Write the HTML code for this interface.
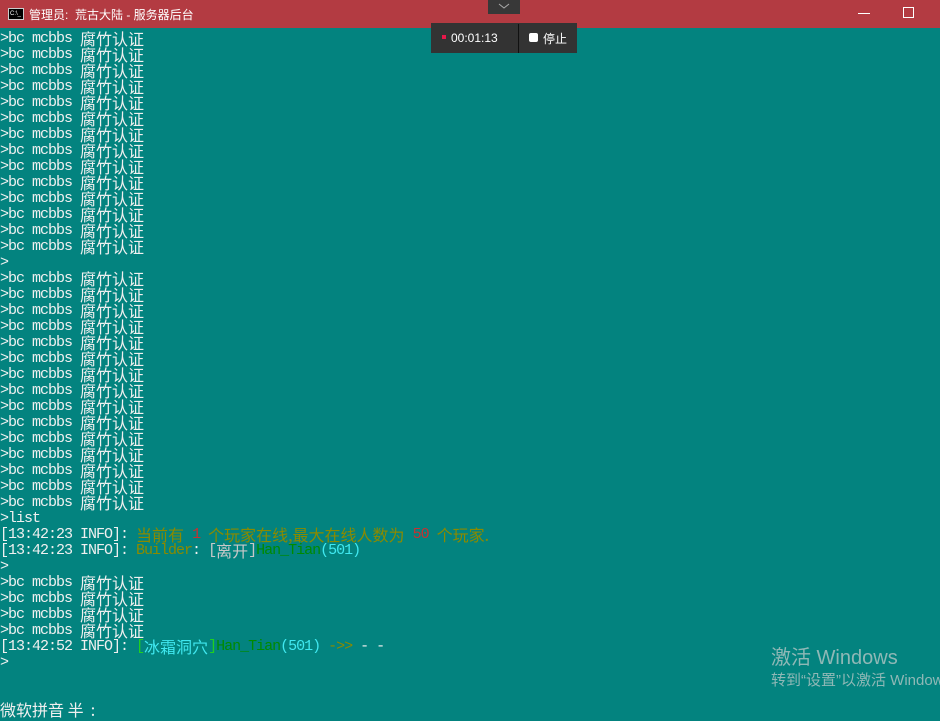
<!DOCTYPE html>
<html><head><meta charset="utf-8"><style>
*{margin:0;padding:0}
body{width:940px;height:721px;overflow:hidden;background:#03837f;position:relative;font-family:"Liberation Mono","Noto Sans CJK SC",monospace}
#tb{position:absolute;left:0;top:0;width:940px;height:28px;background:#b33b42}
#tb .t{position:absolute;left:29px;top:6px;font:12px "Liberation Sans","Noto Sans CJK SC",sans-serif;color:#fff}
#ico{position:absolute;left:8px;top:8px;width:14px;height:10px;background:#000;border:1px solid #ccc;font:6px "Liberation Sans",sans-serif;color:#fff;line-height:10px;text-indent:1px}
#con{position:absolute;left:0;top:31px;color:#f0f0f0;font-size:15px;letter-spacing:-1px}
.l{display:block;height:16px;line-height:16px;white-space:pre}
.l span{display:inline-block;vertical-align:top;height:16px;line-height:16px}
.l .c{font-family:"Noto Sans CJK SC",sans-serif;font-size:16px;letter-spacing:0;line-height:16px;height:16px;position:relative;top:-1px}
.y{color:#8a8a00}.r{color:#c83030}.g{color:#008a00}.a{color:#40e8f0}.s{color:#c8c8c8}.b{color:#20d020}
#rec{position:absolute;left:431px;top:23px;width:146px;height:30px;background:#333;color:#fff;font:12px "Liberation Sans","Noto Sans CJK SC",sans-serif}
#wm{position:absolute;left:771px;top:646px;color:#8fb8b6;font-family:"Liberation Sans","Noto Sans CJK SC",sans-serif;white-space:nowrap}
</style></head><body>
<div id="tb"><div id="ico">C:\_</div><div class="t">管理员:&nbsp;&nbsp;荒古大陆 - 服务器后台</div>
<div style="position:absolute;left:488px;top:0;width:32px;height:14px;background:#383838"><svg width="32" height="14"><path d="M11 4l5 4 5-4" stroke="#aaa" fill="none"/></svg></div>
<div style="position:absolute;left:858px;top:13px;width:12px;height:1px;background:#fff"></div>
<div style="position:absolute;left:903px;top:7px;width:9px;height:9px;border:1px solid #fff"></div>
</div>
<div id="rec"><div style="position:absolute;left:11px;top:12px;width:4px;height:4px;background:#e8174a"></div><div style="position:absolute;left:20px;top:8px">00:01:13</div><div style="position:absolute;left:87px;top:1px;width:1px;height:29px;background:#111"></div><div style="position:absolute;left:98px;top:10px;width:9px;height:9px;background:#fff;border-radius:2px"></div><div style="position:absolute;left:112px;top:7px">停止</div></div>
<div id="con">
<div class="l">&gt;bc mcbbs <span class="c">腐竹认证</span></div>
<div class="l">&gt;bc mcbbs <span class="c">腐竹认证</span></div>
<div class="l">&gt;bc mcbbs <span class="c">腐竹认证</span></div>
<div class="l">&gt;bc mcbbs <span class="c">腐竹认证</span></div>
<div class="l">&gt;bc mcbbs <span class="c">腐竹认证</span></div>
<div class="l">&gt;bc mcbbs <span class="c">腐竹认证</span></div>
<div class="l">&gt;bc mcbbs <span class="c">腐竹认证</span></div>
<div class="l">&gt;bc mcbbs <span class="c">腐竹认证</span></div>
<div class="l">&gt;bc mcbbs <span class="c">腐竹认证</span></div>
<div class="l">&gt;bc mcbbs <span class="c">腐竹认证</span></div>
<div class="l">&gt;bc mcbbs <span class="c">腐竹认证</span></div>
<div class="l">&gt;bc mcbbs <span class="c">腐竹认证</span></div>
<div class="l">&gt;bc mcbbs <span class="c">腐竹认证</span></div>
<div class="l">&gt;bc mcbbs <span class="c">腐竹认证</span></div>
<div class="l">&gt;</div>
<div class="l">&gt;bc mcbbs <span class="c">腐竹认证</span></div>
<div class="l">&gt;bc mcbbs <span class="c">腐竹认证</span></div>
<div class="l">&gt;bc mcbbs <span class="c">腐竹认证</span></div>
<div class="l">&gt;bc mcbbs <span class="c">腐竹认证</span></div>
<div class="l">&gt;bc mcbbs <span class="c">腐竹认证</span></div>
<div class="l">&gt;bc mcbbs <span class="c">腐竹认证</span></div>
<div class="l">&gt;bc mcbbs <span class="c">腐竹认证</span></div>
<div class="l">&gt;bc mcbbs <span class="c">腐竹认证</span></div>
<div class="l">&gt;bc mcbbs <span class="c">腐竹认证</span></div>
<div class="l">&gt;bc mcbbs <span class="c">腐竹认证</span></div>
<div class="l">&gt;bc mcbbs <span class="c">腐竹认证</span></div>
<div class="l">&gt;bc mcbbs <span class="c">腐竹认证</span></div>
<div class="l">&gt;bc mcbbs <span class="c">腐竹认证</span></div>
<div class="l">&gt;bc mcbbs <span class="c">腐竹认证</span></div>
<div class="l">&gt;bc mcbbs <span class="c">腐竹认证</span></div>
<div class="l">&gt;list</div>
<div class="l">[13:42:23 INFO]: <span class="c y">当前有</span> <span class="r">1</span> <span class="c y">个玩家在线,最大在线人数为</span> <span class="r">50</span> <span class="c y">个玩家.</span></div>
<div class="l">[13:42:23 INFO]: <span class="y">Builder</span>: <span class="s">[</span><span class="c s">离开</span><span class="s">]</span><span class="g">Han_Tian</span><span class="a">(501)</span></div>
<div class="l">&gt;</div>
<div class="l">&gt;bc mcbbs <span class="c">腐竹认证</span></div>
<div class="l">&gt;bc mcbbs <span class="c">腐竹认证</span></div>
<div class="l">&gt;bc mcbbs <span class="c">腐竹认证</span></div>
<div class="l">&gt;bc mcbbs <span class="c">腐竹认证</span></div>
<div class="l">[13:42:52 INFO]: <span class="b">[</span><span class="c a">冰霜洞穴</span><span class="b">]</span><span class="g">Han_Tian</span><span class="a">(501)</span> <span class="y">-&gt;&gt;</span> - -</div>
<div class="l">&gt;</div>
</div>
<div style="position:absolute;left:0;top:700px;color:#f0f0f0;font:16px 'Noto Sans CJK SC',sans-serif;line-height:18px;white-space:pre">微软拼音 半  :</div>
<div id="wm"><div style="font-size:20px;line-height:24px">激活 Windows</div><div style="font-size:15px;line-height:22px">转到“设置”以激活 Windows。</div></div>
</body></html>
